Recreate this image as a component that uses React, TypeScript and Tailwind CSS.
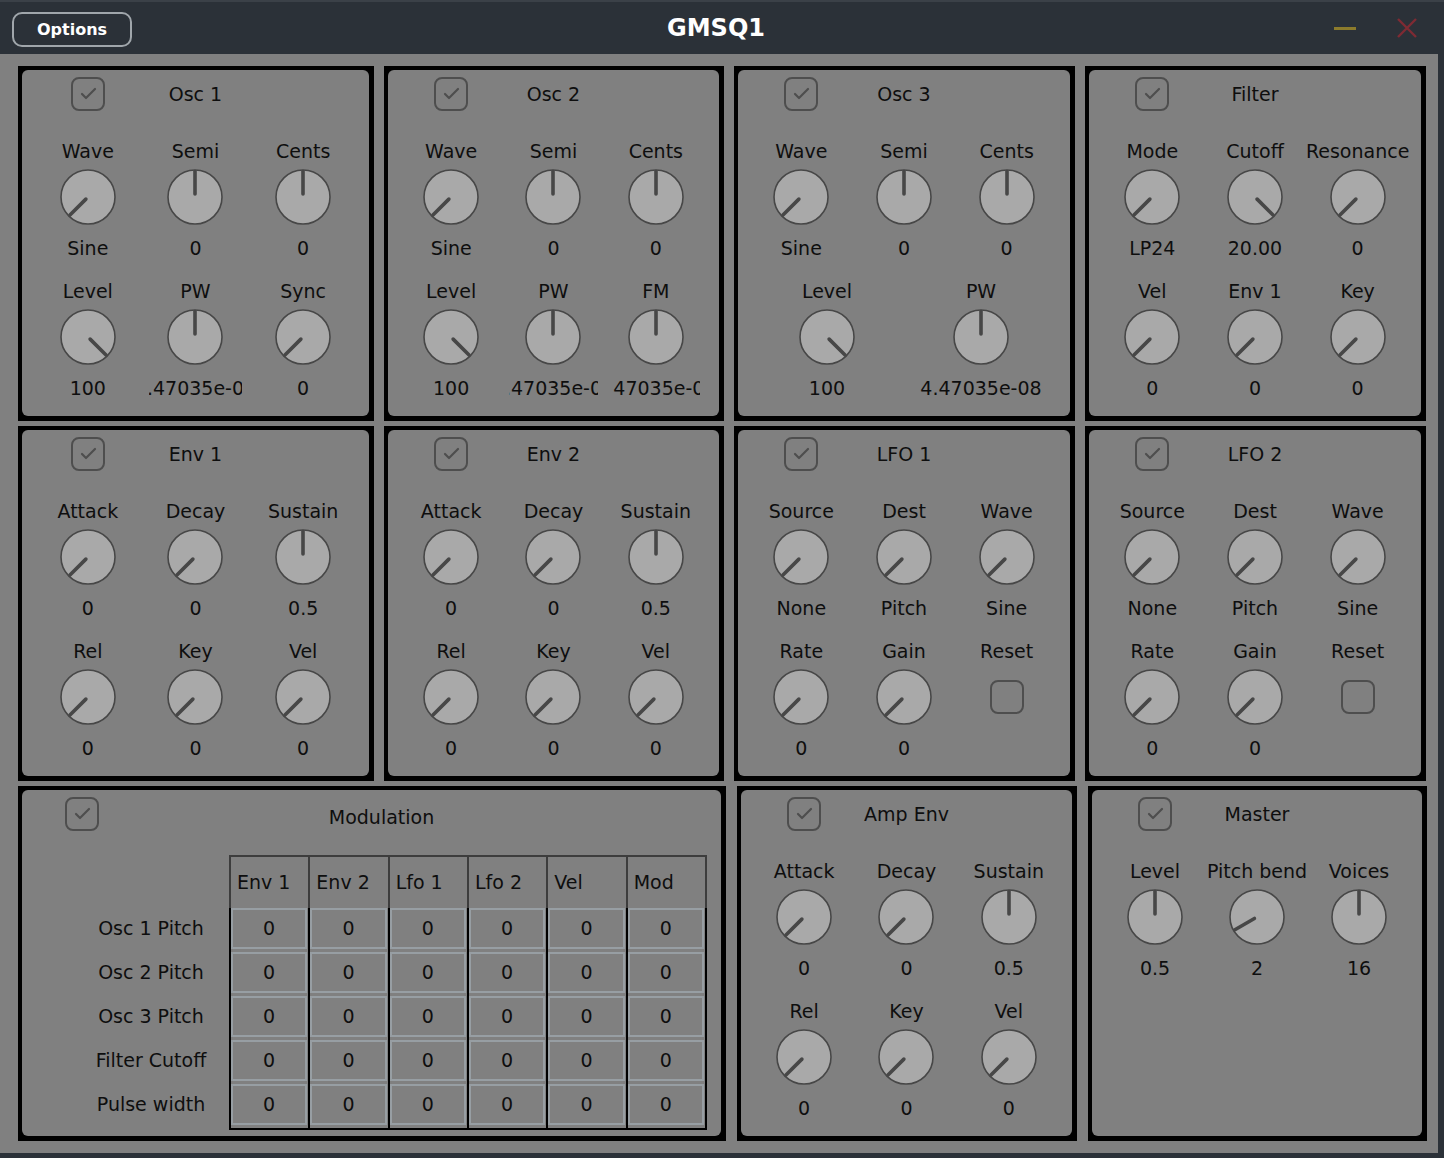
import React from "react";

type K = { label: string; angle?: number; value?: string; reset?: boolean };

function Knob({ angle }: { angle: number }) {
    const rad = (angle * Math.PI) / 180;
    const x1 = 28 + Math.sin(rad) * 3;
    const y1 = 28 - Math.cos(rad) * 3;
    const x2 = 28 + Math.sin(rad) * 25.5;
    const y2 = 28 - Math.cos(rad) * 25.5;
    return (
        <svg width="56" height="56" viewBox="0 0 56 56">
            <circle cx="28" cy="28" r="27" fill="#a9a9a9" stroke="#474747" strokeWidth="1.6" />
            <line x1={x1} y1={y1} x2={x2} y2={y2} stroke="#474747" strokeWidth="3.6" strokeLinecap="round" />
        </svg>
    );
}

function CheckBox({ on }: { on: boolean }) {
    return (
        <svg width="34" height="34" viewBox="0 0 34 34">
            <rect x="1" y="1" width="32" height="32" rx="7" fill="none" stroke="#4e4e4e" strokeWidth="2" />
            {on && <path d="M11 17 L15 21 L24 12" fill="none" stroke="#4e4e4e" strokeWidth="2.2" strokeLinecap="round" strokeLinejoin="round" />}
        </svg>
    );
}

function Cell({ k }: { k: K }) {
    return (
        <div className="flex flex-col items-center">
            <div className="h-[24px] leading-[24px] whitespace-nowrap">{k.label}</div>
            <div className="mt-[6px] h-[56px] flex items-center justify-center">
                {k.reset ? <CheckBox on={false} /> : <Knob angle={k.angle ?? -135} />}
            </div>
            <div className="mt-[11px] h-[24px] leading-[24px] w-[calc(100%-14px)] overflow-hidden flex justify-center whitespace-nowrap">
                {k.value}
            </div>
        </div>
    );
}

function Panel({ className, children }: { className: string; children: React.ReactNode }) {
    return (
        <div className={"bg-black pt-[4px] pl-[4px] pr-[5px] pb-[5px] h-full " + className}>
            <div className="bg-[#808080] rounded-[6px] h-full">{children}</div>
        </div>
    );
}

function KnobPanel({ title, rows, className }: { title: string; rows: K[][]; className: string }) {
    return (
        <Panel className={className}>
            <div className="px-[12px] pt-[7px]">
                <div className="grid grid-cols-3 h-[34px] items-center">
                    <div className="flex justify-center">
                        <CheckBox on />
                    </div>
                    <div className="text-center whitespace-nowrap">{title}</div>
                </div>
                <div className="mt-[28px] flex flex-col gap-[19px]">
                    {rows.map((row, i) => (
                        <div key={i} className={row.length === 2 ? "grid grid-cols-2" : "grid grid-cols-3"}>
                            {row.map((k, j) => (
                                <Cell key={j} k={k} />
                            ))}
                        </div>
                    ))}
                </div>
            </div>
        </Panel>
    );
}

const PWV = "4.47035e-08";

const envRows: K[][] = [
    [
        { label: "Attack", value: "0" },
        { label: "Decay", value: "0" },
        { label: "Sustain", angle: 0, value: "0.5" },
    ],
    [
        { label: "Rel", value: "0" },
        { label: "Key", value: "0" },
        { label: "Vel", value: "0" },
    ],
];

const lfoRows: K[][] = [
    [
        { label: "Source", value: "None" },
        { label: "Dest", value: "Pitch" },
        { label: "Wave", value: "Sine" },
    ],
    [
        { label: "Rate", value: "0" },
        { label: "Gain", value: "0" },
        { label: "Reset", reset: true },
    ],
];

const oscTop: K[] = [
    { label: "Wave", value: "Sine" },
    { label: "Semi", angle: 0, value: "0" },
    { label: "Cents", angle: 0, value: "0" },
];

const modCols = ["Env 1", "Env 2", "Lfo 1", "Lfo 2", "Vel", "Mod"];
const modRows = ["Osc 1 Pitch", "Osc 2 Pitch", "Osc 3 Pitch", "Filter Cutoff", "Pulse width"];

function ModulationPanel() {
    return (
        <Panel className="w-[708px]">
            <div className="pt-[7px]">
                <div className="flex h-[34px] items-center pl-[43px]">
                    <CheckBox on />
                    <div className="flex-1 text-center pr-[57px] pt-[6px]">Modulation</div>
                </div>
                <div className="mt-[24px] flex pl-[51px]">
                    <div className="w-[156px] flex flex-col">
                        <div className="h-[53px]" />
                        {modRows.map((r) => (
                            <div key={r} className="h-[44px] pb-[3px] flex items-center justify-center whitespace-nowrap">
                                {r}
                            </div>
                        ))}
                    </div>
                    <div className="w-[478px]">
                        <div className="grid grid-cols-6 h-[53px] border-t-2 border-l-2 border-[#3d3d3d]">
                            {modCols.map((c) => (
                                <div key={c} className="border-r-2 border-[#3d3d3d] flex items-center pl-[6px] whitespace-nowrap">
                                    {c}
                                </div>
                            ))}
                        </div>
                        <div className="grid grid-cols-6 border-b-2 border-r-2 border-black">
                            {modRows.map((r) =>
                                modCols.map((c) => (
                                    <div key={r + c} className="h-[44px] border-l-2 border-black pr-[1px] pb-[3px]">
                                        <div className="h-full border-2 border-[#979ea3] flex items-center justify-center">0</div>
                                    </div>
                                ))
                            )}
                        </div>
                    </div>
                </div>
            </div>
        </Panel>
    );
}

function MasterPanel() {
    return (
        <KnobPanel
            title="Master"
            className="w-[339px]"
            rows={[
                [
                    { label: "Level", angle: 0, value: "0.5" },
                    { label: "Pitch bend", angle: -120, value: "2" },
                    { label: "Voices", angle: 0, value: "16" },
                ],
            ]}
        />
    );
}

function App() {
    return (
        <div className="w-[1444px] h-[1158px] overflow-hidden bg-[#808080] flex flex-col text-[19px] text-[#0e0e0e] font-['DejaVu_Sans',sans-serif]">
            <div className="h-[54px] bg-[#2b3138] border-t-2 border-[#3b4148] flex items-center shrink-0">
                <div className="w-[300px] pl-[12px] pt-[3px]">
                    <button className="w-[120px] h-[35px] rounded-[10px] border-2 border-[#a0a6ab] text-white text-[16px] font-bold">
                        Options
                    </button>
                </div>
                <div className="flex-1 text-center text-white text-[24px] font-bold">GMSQ1</div>
                <div className="w-[312px] flex items-center justify-end gap-[40px] pr-[26px]">
                    <div className="w-[22px] h-[3px] bg-[#8c7b2c]" />
                    <svg width="22" height="22" viewBox="0 0 22 22">
                        <path d="M2 2 L20 20 M20 2 L2 20" stroke="#7e2b33" strokeWidth="2.4" />
                    </svg>
                </div>
            </div>
            <div className="flex-1 flex">
                <div className="flex-1 pt-[12px] pl-[18px] flex flex-col gap-[5px]">
                    <div className="h-[355px] flex gap-[10px]">
                        <KnobPanel
                            title="Osc 1"
                            className="w-[356px]"
                            rows={[
                                oscTop,
                                [
                                    { label: "Level", angle: 135, value: "100" },
                                    { label: "PW", angle: 0, value: PWV },
                                    { label: "Sync", value: "0" },
                                ],
                            ]}
                        />
                        <KnobPanel
                            title="Osc 2"
                            className="w-[340px]"
                            rows={[
                                oscTop,
                                [
                                    { label: "Level", angle: 135, value: "100" },
                                    { label: "PW", angle: 0, value: PWV },
                                    { label: "FM", angle: 0, value: PWV },
                                ],
                            ]}
                        />
                        <KnobPanel
                            title="Osc 3"
                            className="w-[341px]"
                            rows={[
                                oscTop,
                                [
                                    { label: "Level", angle: 135, value: "100" },
                                    { label: "PW", angle: 0, value: PWV },
                                ],
                            ]}
                        />
                        <KnobPanel
                            title="Filter"
                            className="w-[341px]"
                            rows={[
                                [
                                    { label: "Mode", value: "LP24" },
                                    { label: "Cutoff", angle: 135, value: "20.00" },
                                    { label: "Resonance", value: "0" },
                                ],
                                [
                                    { label: "Vel", value: "0" },
                                    { label: "Env 1", value: "0" },
                                    { label: "Key", value: "0" },
                                ],
                            ]}
                        />
                    </div>
                    <div className="h-[355px] flex gap-[10px]">
                        <KnobPanel title="Env 1" className="w-[356px]" rows={envRows} />
                        <KnobPanel title="Env 2" className="w-[340px]" rows={envRows} />
                        <KnobPanel title="LFO 1" className="w-[341px]" rows={lfoRows} />
                        <KnobPanel title="LFO 2" className="w-[341px]" rows={lfoRows} />
                    </div>
                    <div className="h-[355px] flex gap-[11px]">
                        <ModulationPanel />
                        <KnobPanel title="Amp Env" className="w-[340px]" rows={envRows} />
                        <MasterPanel />
                    </div>
                </div>
                <div className="w-[6px] bg-[#2b3138]" />
            </div>
            <div className="h-[5px] bg-[#2b3138] shrink-0" />
        </div>
    );
}

export default App;
